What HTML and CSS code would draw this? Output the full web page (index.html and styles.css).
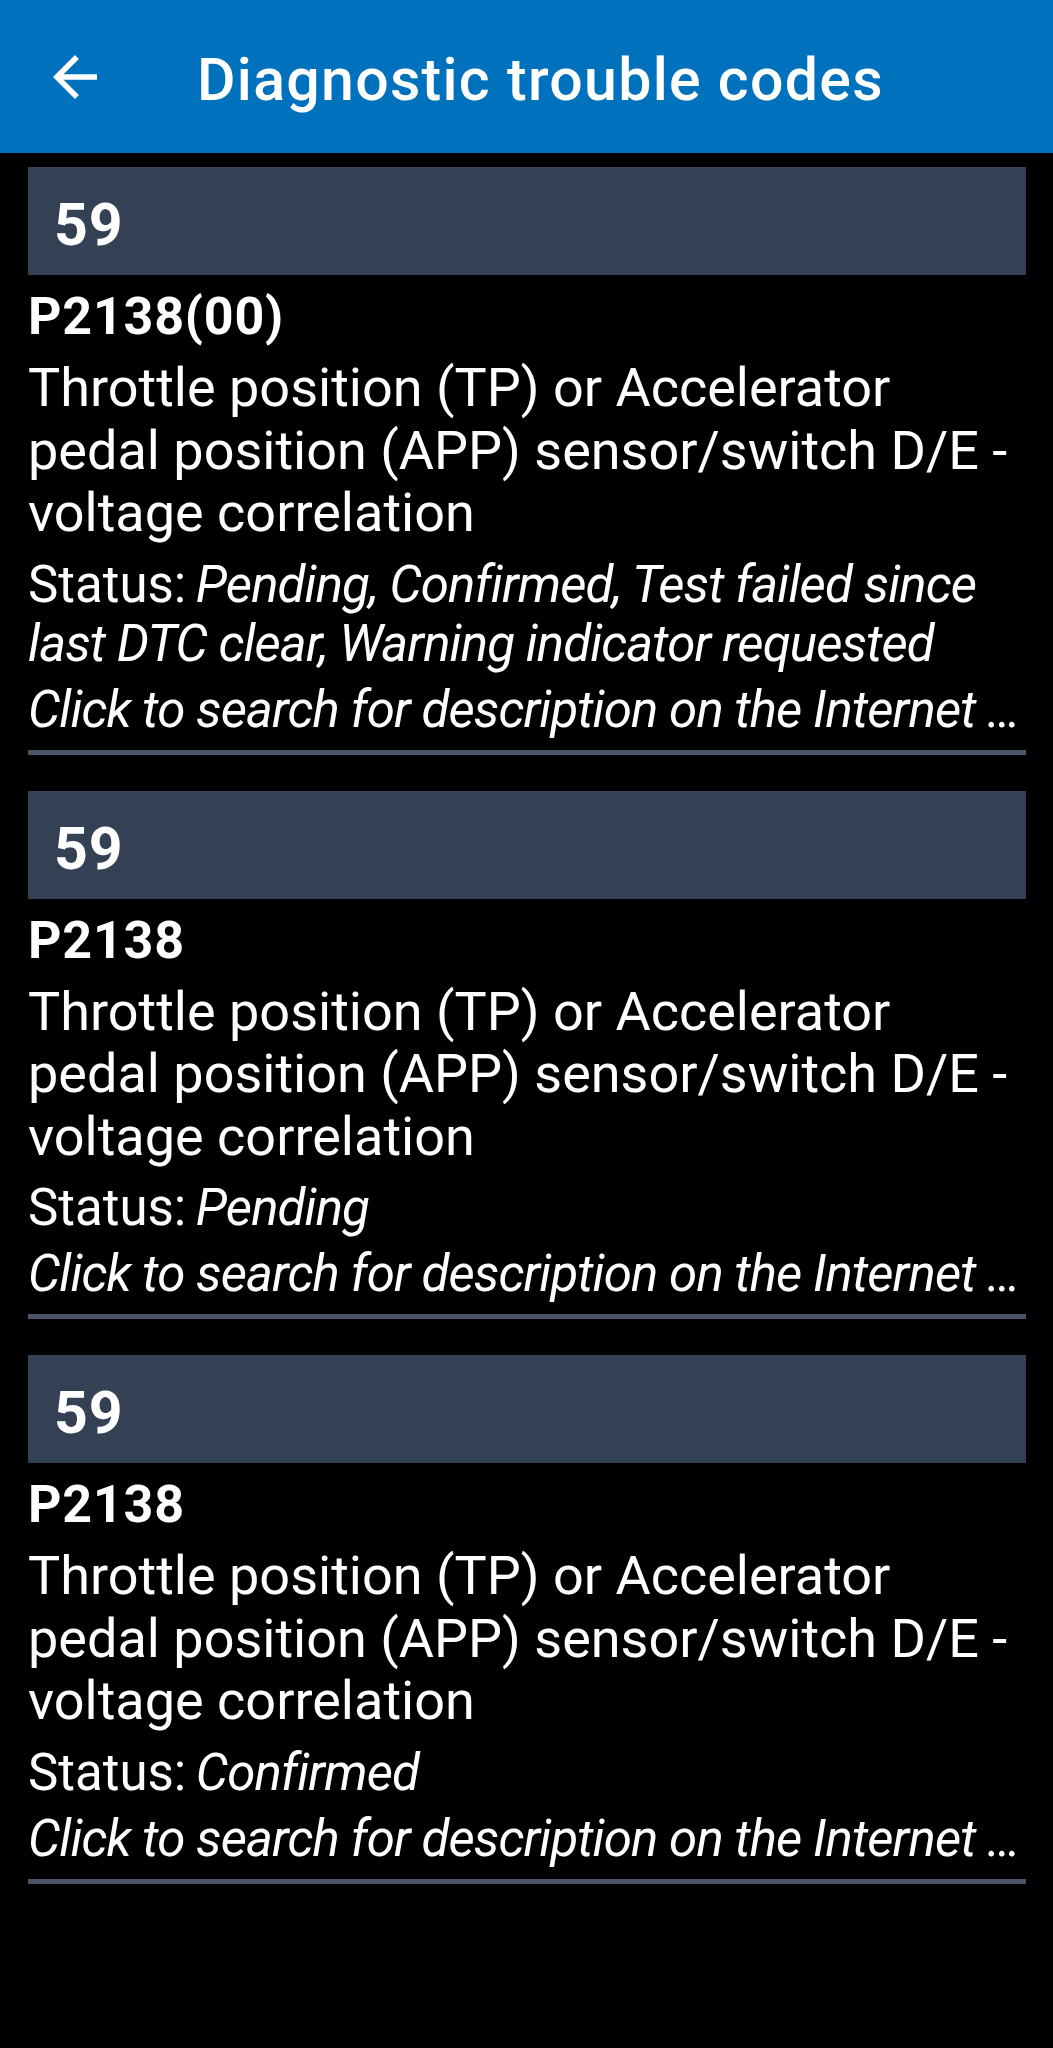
FILE: index.html
```html
<!DOCTYPE html>
<html lang="en">
<head>
    <meta charset="UTF-8">
    <meta name="viewport" content="width=device-width, initial-scale=1.0">
    <title>Diagnostic trouble codes</title>
    <link rel="stylesheet" href="styles.css">
</head>
<body>

<header class="toolbar">
    <svg class="back" viewBox="0 0 24 24" aria-label="Back">
        <path d="M20 11H7.83l5.59-5.59L12 4l-8 8 8 8 1.41-1.41L7.83 13H20v-2z"/>
    </svg>
    <h1 class="title">Diagnostic trouble codes</h1>
</header>

<div class="list">
    <div class="dtc">
        <div class="dtc-head">59</div>
        <div class="dtc-code">P2138(00)</div>
        <div class="dtc-desc">Throttle position (TP) or Accelerator pedal position (APP) sensor/switch D/E - voltage correlation</div>
        <div class="dtc-status">Status: <em>Pending, Confirmed, Test failed since last DTC clear, Warning indicator requested</em></div>
        <div class="dtc-link"><em>Click to search for description on the Internet …</em></div>
        <div class="dtc-rule"></div>
    </div>

    <div class="dtc">
        <div class="dtc-head">59</div>
        <div class="dtc-code">P2138</div>
        <div class="dtc-desc">Throttle position (TP) or Accelerator pedal position (APP) sensor/switch D/E - voltage correlation</div>
        <div class="dtc-status">Status: <em>Pending</em></div>
        <div class="dtc-link"><em>Click to search for description on the Internet …</em></div>
        <div class="dtc-rule"></div>
    </div>

    <div class="dtc">
        <div class="dtc-head">59</div>
        <div class="dtc-code">P2138</div>
        <div class="dtc-desc">Throttle position (TP) or Accelerator pedal position (APP) sensor/switch D/E - voltage correlation</div>
        <div class="dtc-status">Status: <em>Confirmed</em></div>
        <div class="dtc-link"><em>Click to search for description on the Internet …</em></div>
        <div class="dtc-rule"></div>
    </div>
</div>

</body>
</html>
```

FILE: styles.css
```css
* {
    box-sizing: border-box;
}

body {
    margin: 0;
    background: #000;
    color: #fff;
    font-family: Roboto, "Noto Sans", sans-serif;
}

.toolbar {
    display: flex;
    align-items: center;
    height: 153px;
    padding-left: 42px;
    background: #0071bc;
}

.back {
    width: 66px;
    height: 66px;
    fill: #fff;
    flex-shrink: 0;
}

.title {
    margin: 0 0 0 89px;
    padding-top: 7px;
    font-size: 59px;
    font-weight: 500;
    line-height: 70px;
    letter-spacing: 1.3px;
}

.list {
    padding: 14px 27px 0 28px;
}

.dtc {
    margin-bottom: 36px;
}

.dtc-head {
    height: 108px;
    padding: 24px 0 0 26px;
    background: #344154;
    font-size: 59px;
    font-weight: 700;
    line-height: 68px;
    letter-spacing: 1px;
}

.dtc-code {
    margin-top: 12px;
    font-size: 52px;
    font-weight: 700;
    line-height: 59px;
    letter-spacing: 0.8px;
}

.dtc-desc {
    margin-top: 11px;
    font-size: 54px;
    line-height: 62.5px;
}

.dtc-status {
    margin-top: 10px;
    font-size: 51px;
    line-height: 59px;
}

.dtc-status em {
    margin-left: -3px;
}

.dtc-link {
    margin-top: 7px;
    font-size: 51px;
    line-height: 59px;
    white-space: nowrap;
}

em {
    font-style: italic;
    letter-spacing: -0.9px;
}

.dtc-rule {
    margin-top: 11px;
    height: 5px;
    background: #4b5567;
}
```
